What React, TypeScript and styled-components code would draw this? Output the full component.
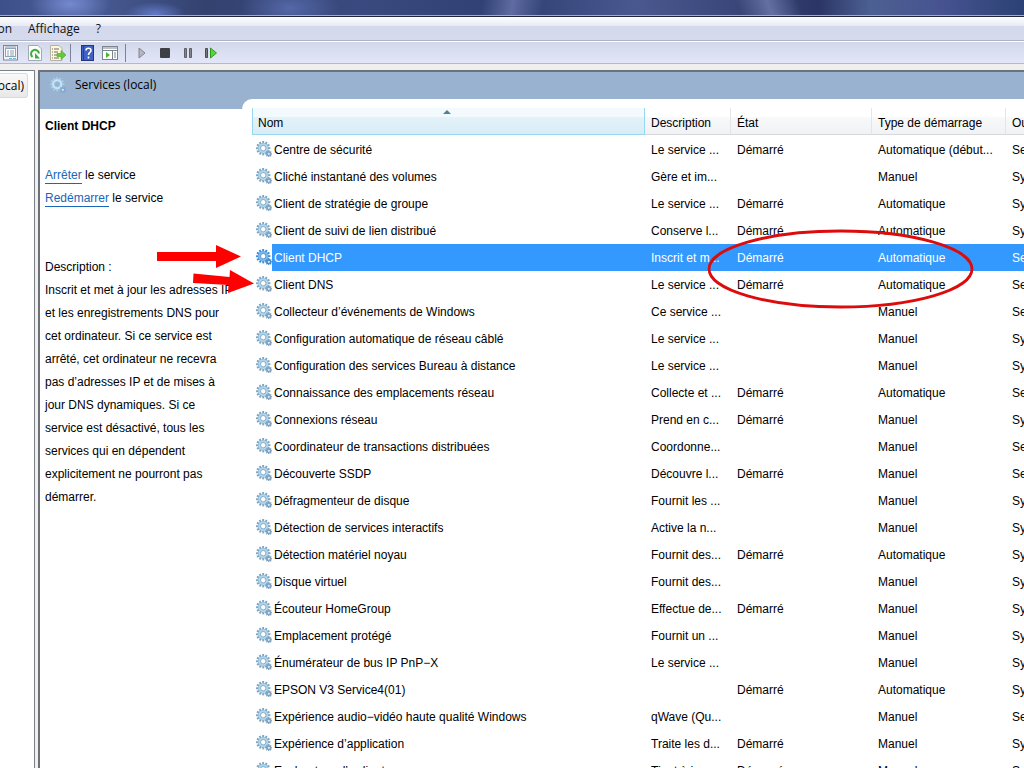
import React from "react";
import styled, { createGlobalStyle, css } from "styled-components";

const Global = createGlobalStyle`
  * { box-sizing: border-box; }
  html, body, #root { height: 100%; }
  body {
    margin: 0;
    overflow: hidden;
    background: #fff;
    color: #000;
    font-family: "Liberation Sans", Arial, sans-serif;
    font-size: 12px;
  }
`;

const uiFont = css`
  font-family: "Open Sans", "Noto Sans", sans-serif;
  font-size: 12px;
  line-height: 16px;
`;

const Window = styled.div`
  display: flex;
  flex-direction: column;
  height: 100%;
`;

const TitleBar = styled.div`
  flex: none;
  height: 17px;
  border-bottom: 1px solid #1e2440;
  box-shadow: inset 0 -1px 0 #a4abd0;
  background:
    radial-gradient(ellipse 40px 20px at 70px 4px, #7489cf, transparent),
    radial-gradient(ellipse 30px 12px at 155px 14px, #6179c6, transparent),
    radial-gradient(ellipse 50px 24px at 290px 8px, #5568a8, transparent),
    linear-gradient(100deg, transparent 47%, #5f6ba2 50%, transparent 53%),
    linear-gradient(70deg, transparent 72%, #6470a2 75%, transparent 78%),
    linear-gradient(90deg, #3d5089, #4b5d98 8%, #33426f 20%, #3a4a80 35%, #2f3f72 50%, #4a5890 62%, #3a4678 72%, #2b3666 80%, #4d6092 85%, #465390 92%, #2b4174);
`;

const MenuBar = styled.nav`
  flex: none;
  display: flex;
  align-items: center;
  gap: 16px;
  height: 25px;
  border-bottom: 1px solid #fff;
  box-shadow: inset 0 -1px 0 #aeb4c4;
  background: linear-gradient(#fff, #e6eaf5 9px, #d3d9eb 9px, #d5daee);
`;

const MenuItem = styled.button<{ $w?: number }>`
  ${uiFont}
  display: flex;
  justify-content: flex-end;
  width: ${(p) => (p.$w ? `${p.$w}px` : "auto")};
  border: 0;
  padding: 0;
  background: none;
  color: #111;
`;

const ToolBar = styled.div`
  flex: none;
  display: flex;
  align-items: center;
  height: 22px;
  padding: 1px 0 0 2px;
  border-bottom: 1px solid #b4b8cc;
  background: linear-gradient(#d2d8ea, #e2e6f8);
`;

const ToolButton = styled.button<{ $w?: number }>`
  flex: none;
  display: flex;
  align-items: center;
  justify-content: center;
  width: ${(p) => p.$w ?? 23}px;
  height: 20px;
  padding: 0;
  border: 0;
  background: none;
`;

const Separator = styled.span`
  width: 1px;
  height: 18px;
  margin: 0 4px;
  background: #7c8296;
`;

const Body = styled.div`
  flex: 1;
  min-height: 0;
  display: flex;
  padding-top: 6px;
  background: #eeefee;
`;

const Tree = styled.aside`
  flex: none;
  width: 35px;
  padding-top: 2px;
  border-top: 1px solid #7b7f86;
  border-right: 1px solid #7b7f86;
  background: #fff;
`;

const TreeItem = styled.button`
  ${uiFont}
  display: flex;
  align-items: center;
  justify-content: flex-end;
  width: 28px;
  height: 25px;
  padding: 0 3px 0 0;
  border: 1px solid #dadada;
  border-left: 0;
  border-radius: 0 3px 3px 0;
  background: linear-gradient(#f9f9f9, #e8e8e8);
`;

const Pane = styled.main`
  flex: 1;
  min-width: 0;
  display: flex;
  flex-direction: column;
  margin-left: 3px;
  border-top: 2px solid #6d7278;
  border-left: 2px solid #6d7278;
  background: #99b2d0;
`;

const PaneHeader = styled.header`
  ${uiFont}
  flex: none;
  display: flex;
  align-items: center;
  gap: 9px;
  height: 27px;
  padding: 0 0 2px 10px;
`;

const Split = styled.div`
  flex: 1;
  min-height: 0;
  display: flex;
`;

const Detail = styled.section`
  flex: none;
  width: 202px;
  margin-top: 10px;
  padding: 6px 0 0 5px;
  background: #fff;
  line-height: 23px;
`;

const ServiceTitle = styled.h1`
  margin: 0 0 26px;
  font-size: 12px;
  line-height: 23px;
`;

const Line = styled.p`
  margin: 0;
`;

const Action = styled.a`
  color: #1a66b8;
  text-decoration: none;
  border-bottom: 1px solid #1a66b8;
  padding-bottom: 1px;
`;

const Description = styled.div`
  width: 197px;
  margin-top: 46px;
`;

const ListPanel = styled.section`
  flex: 1;
  min-width: 0;
  overflow: hidden;
  padding: 9px 0 0 10px;
  border-top-left-radius: 10px;
  background: #fff;
`;

const Corner = styled.div`
  flex: 1;
  min-width: 0;
  display: flex;
  background: linear-gradient(#99b2d0 10px, #fff 10px);
`;

const Table = styled.table`
  width: 100%;
  table-layout: fixed;
  border-collapse: separate;
  border-spacing: 0;
`;

const Col = styled.col<{ $w?: number }>`
  width: ${(p) => (p.$w ? `${p.$w}px` : "auto")};
`;

const Th = styled.th<{ $sorted?: boolean }>`
  position: relative;
  height: 27px;
  padding: 3px 0 0 6px;
  border-right: 1px solid ${(p) => (p.$sorted ? "#96d9f0" : "#e2e6ea")};
  border-bottom: 1px solid ${(p) => (p.$sorted ? "#96d9f0" : "#d5d8dc")};
  background: ${(p) =>
    p.$sorted
      ? "linear-gradient(#f3fafd 9px, #e3f2f9 9px, #d8ecf6)"
      : "linear-gradient(#fff 9px, #f8f9fa 9px, #f1f2f4)"};
  box-shadow: ${(p) => (p.$sorted ? "inset 1px 0 0 #96d9f0" : "none")};
  font-weight: normal;
  text-align: left;
  white-space: nowrap;
  overflow: hidden;

  &:last-child {
    border-right: 0;
  }
`;

const SortMark = styled.svg`
  position: absolute;
  top: 2px;
  left: 50%;
  margin-left: -5px;
`;

const Row = styled.tr<{ $selected?: boolean }>`
  ${(p) =>
    p.$selected &&
    css`
      color: #fff;
      td {
        background: #3399ff;
      }
      td:first-child {
        background: linear-gradient(90deg, #fff 20px, #3399ff 20px);
      }
    `}
`;

const Td = styled.td`
  height: 27px;
  padding: 0 0 0 6px;
  overflow: hidden;
  white-space: nowrap;
`;

const NameCell = styled.div`
  display: flex;
  align-items: center;
  gap: 2px;
  margin-left: -2px;

  svg {
    margin-bottom: 2px;
  }
`;

const HeadRow = styled.tr`
  td {
    height: 1px;
    padding: 0;
  }
`;

const Annotations = styled.svg`
  position: absolute;
  top: 0;
  left: 0;
  pointer-events: none;
`;

const teeth = (n: number) =>
  Array.from({ length: n }, (_, i) => (i * 360) / n);

function Gears({ selected, pale }: { selected?: boolean; pale?: boolean }) {
  const rim = selected ? "#3f8fd8" : pale ? "#a9cbe6" : "#7fa6c2";
  const face = selected ? "#7dbbee" : pale ? "#c6e4f6" : "#b0d6ec";
  const line = selected ? "#3a7fc0" : pale ? "#9cc4e0" : "#6e9abf";
  const small = selected ? "#3f86c8" : pale ? "#7fa8cc" : "#7b9fbe";
  return (
    <svg width="16" height="16" viewBox="0 0 16 16" aria-hidden="true">
      {teeth(12).map((a) => (
        <rect key={a} x="6.2" y="0" width="1.900" height="3" fill={rim} transform={`rotate(${a} 7.200 7.200)`} />
      ))}
      <circle cx="7.200" cy="7.200" r="5.300" fill={rim} />
      <circle cx="7.200" cy="7.200" r="3.900" fill={pale ? "#99b2d0" : "#fff"} stroke={face} strokeWidth="2.200" />
      <circle cx="7.200" cy="7.200" r="2.700" fill="none" stroke={line} strokeWidth="0.800" />
      {teeth(8).map((a) => (
        <rect key={a} x="12.200" y="9.400" width="1.300" height="2" fill={small} transform={`rotate(${a} 12.800 12.800)`} />
      ))}
      <circle cx="12.800" cy="12.800" r="1.700" fill="#dbe9f3" stroke={small} strokeWidth="1.100" />
    </svg>
  );
}

const S = "Démarré";
const A = "Automatique";
const M = "Manuel";

const services: [string, string, string, string, string][] = [
  ["Centre de sécurité", "Le service ...", S, "Automatique (début...", "Se"],
  ["Cliché instantané des volumes", "Gère et im...", "", M, "Sy"],
  ["Client de stratégie de groupe", "Le service ...", S, A, "Sy"],
  ["Client de suivi de lien distribué", "Conserve l...", S, A, "Sy"],
  ["Client DHCP", "Inscrit et m...", S, A, "Se"],
  ["Client DNS", "Le service ...", S, A, "Se"],
  ["Collecteur d’événements de Windows", "Ce service ...", "", M, "Se"],
  ["Configuration automatique de réseau câblé", "Le service ...", "", M, "Sy"],
  ["Configuration des services Bureau à distance", "Le service ...", "", M, "Sy"],
  ["Connaissance des emplacements réseau", "Collecte et ...", S, A, "Se"],
  ["Connexions réseau", "Prend en c...", S, M, "Sy"],
  ["Coordinateur de transactions distribuées", "Coordonne...", "", M, "Se"],
  ["Découverte SSDP", "Découvre l...", S, M, "Se"],
  ["Défragmenteur de disque", "Fournit les ...", "", M, "Sy"],
  ["Détection de services interactifs", "Active la n...", "", M, "Sy"],
  ["Détection matériel noyau", "Fournit des...", S, A, "Sy"],
  ["Disque virtuel", "Fournit des...", "", M, "Sy"],
  ["Écouteur HomeGroup", "Effectue de...", S, M, "Sy"],
  ["Emplacement protégé", "Fournit un ...", "", M, "Sy"],
  ["Énumérateur de bus IP PnP−X", "Le service ...", "", M, "Sy"],
  ["EPSON V3 Service4(01)", "", S, A, "Sy"],
  ["Expérience audio−vidéo haute qualité Windows", "qWave (Qu...", "", M, "Se"],
  ["Expérience d’application", "Traite les d...", S, M, "Sy"],
  ["Explorateur d’ordinateurs", "Tient à jo...", S, M, "Sy"],
];

export default function App() {
  return (
    <Window>
      <Global />
      <TitleBar />
      <MenuBar>
        <MenuItem $w={12}>on</MenuItem>
        <MenuItem>Affichage</MenuItem>
        <MenuItem>?</MenuItem>
      </MenuBar>
      <ToolBar>
        <ToolButton $w={17} aria-label="Propriétés">
          <svg width="16" height="16" viewBox="0 0 16 16">
            <rect x=".5" y=".5" width="14" height="14.500" fill="#f1f3f6" stroke="#7c8894" />
            <rect x="2.500" y="3.500" width="10" height="8" fill="#fff" stroke="#93a2b4" />
            <path d="M4 6h2M7 6h4M4 8h2M7 8h4M4 10h2M7 10h4M2 2h11" stroke="#8a9cb2" />
            <path d="M6 13.500h3M10 13.500h3" stroke="#5cc4d8" />
          </svg>
        </ToolButton>
        <ToolButton $w={31} aria-label="Actualiser">
          <svg width="14" height="16" viewBox="0 0 14 16">
            <path d="M.5.5h9.500l3.500 3.500v11.500H.5z" fill="#fbfcfb" stroke="#a3aab4" />
            <path d="M4.500 12A4 4 0 1 1 11 8.500" fill="none" stroke="#3cae3c" strokeWidth="2" />
            <path d="M7 8v5.500h5z" fill="#3cae3c" />
          </svg>
        </ToolButton>
        <ToolButton $w={16} aria-label="Exporter la liste">
          <svg width="16" height="16" viewBox="0 0 16 16">
            <path d="M.5.5h8.500l3 3v12H.5z" fill="#fdf8dc" stroke="#b5b29f" />
            <path d="M2 4h1M4 4h5M2 7h1M4 7h4M2 10h1M4 10h4M2 13h1M4 13h5" stroke="#6c6a60" />
            <path d="M7 8.500h4V5.500l5 4.500-5 4.500v-3H7z" fill="#63cb38" stroke="#46a526" strokeWidth=".6" />
          </svg>
        </ToolButton>
        <Separator />
        <ToolButton $w={24} aria-label="Aide">
          <svg width="13" height="16" viewBox="0 0 13 16">
            <rect x=".5" y=".5" width="12" height="15" fill="#3f62c4" stroke="#24377e" />
            <path d="M2.500 1v14" stroke="#243f94" />
            <path d="M5 5.500c0-3 5-3 5 0 0 2-2.500 2-2.500 4.500M7.500 11.500v2" fill="none" stroke="#fff" strokeWidth="1.600" />
          </svg>
        </ToolButton>
        <ToolButton $w={22} aria-label="Volet Actions">
          <svg width="16" height="14" viewBox="0 0 16 14">
            <rect x=".5" y=".5" width="15" height="13" fill="#fff" stroke="#7b8590" />
            <path d="M1 2h14M1 4.500h14M10.500 5v8" stroke="#7b8590" />
            <path d="M12 7h2M12 9h2M12 11h2" stroke="#7b8590" />
            <path d="M4 6l4 3-4 3z" fill="#49b42e" />
          </svg>
        </ToolButton>
        <Separator />
        <ToolButton aria-label="Démarrer le service">
          <svg width="8" height="12" viewBox="0 0 8 12">
            <path d="M1 1l6 5-6 5z" fill="#b5b7c0" stroke="#82858f" />
          </svg>
        </ToolButton>
        <ToolButton aria-label="Arrêter le service">
          <svg width="10" height="10" viewBox="0 0 10 10">
            <rect width="10" height="10" rx="1" fill="#3d3f44" />
          </svg>
        </ToolButton>
        <ToolButton aria-label="Suspendre le service">
          <svg width="8" height="10" viewBox="0 0 8 10">
            <path d="M.5.500h2v9h-2zM5.500.500h2v9h-2z" fill="#83868e" stroke="#5c5f66" />
          </svg>
        </ToolButton>
        <ToolButton aria-label="Redémarrer le service">
          <svg width="12" height="12" viewBox="0 0 12 12">
            <path d="M.5 1.500h2v9h-2z" fill="#777" stroke="#4a4d52" />
            <path d="M5.500 1l6 5-6 5z" fill="#5ad23c" stroke="#2e9a22" />
          </svg>
        </ToolButton>
      </ToolBar>
      <Body>
        <Tree>
          <TreeItem>ocal)</TreeItem>
        </Tree>
        <Pane>
          <PaneHeader>
            <Gears pale />
            <span>Services (local)</span>
          </PaneHeader>
          <Split>
            <Detail>
              <ServiceTitle>Client DHCP</ServiceTitle>
              <Line>
                <Action href="#arreter">Arrêter</Action> le service
              </Line>
              <Line>
                <Action href="#redemarrer">Redémarrer</Action> le service
              </Line>
              <Description>
                <Line>Description :</Line>
                <Line>
                  Inscrit et met à jour les adresses IP
                  <br />
                  et les enregistrements DNS pour
                  <br />
                  cet ordinateur. Si ce service est
                  <br />
                  arrêté, cet ordinateur ne recevra
                  <br />
                  pas d’adresses IP et de mises à
                  <br />
                  jour DNS dynamiques. Si ce
                  <br />
                  service est désactivé, tous les
                  <br />
                  services qui en dépendent
                  <br />
                  explicitement ne pourront pas
                  <br />
                  démarrer.
                </Line>
              </Description>
            </Detail>
            <Corner>
              <ListPanel>
                <Table>
                  <colgroup>
                    <Col $w={393} />
                    <Col $w={86} />
                    <Col $w={141} />
                    <Col $w={134} />
                    <Col />
                  </colgroup>
                  <thead>
                    <tr>
                      <Th $sorted>
                        Nom
                        <SortMark width="8" height="5" viewBox="0 0 8 5">
                          <path d="M4 0l4 4H0z" fill="#4f8295" />
                        </SortMark>
                      </Th>
                      <Th>Description</Th>
                      <Th>État</Th>
                      <Th>Type de démarrage</Th>
                      <Th>Ou</Th>
                    </tr>
                  </thead>
                  <tbody>
                    <HeadRow>
                      <td colSpan={5} />
                    </HeadRow>
                    {services.map(([name, desc, state, type, logon]) => {
                      const selected = name === "Client DHCP";
                      return (
                        <Row key={name} $selected={selected}>
                          <Td>
                            <NameCell>
                              <Gears selected={selected} />
                              {name}
                            </NameCell>
                          </Td>
                          <Td>{desc}</Td>
                          <Td>{state}</Td>
                          <Td>{type}</Td>
                          <Td>{logon}</Td>
                        </Row>
                      );
                    })}
                  </tbody>
                </Table>
              </ListPanel>
            </Corner>
          </Split>
        </Pane>
      </Body>
      <Annotations width="1024" height="768" viewBox="0 0 1024 768" aria-hidden="true">
        <path d="M157 252h59v-7l25 11.500-25 11.500v-7h-59z" fill="#f00" />
        <path d="M193.500 273.500l36 3.500.500-7 24 13.500-26 9.500.500-8-35.500-2z" fill="#f00" />
        <ellipse cx="840.500" cy="269" rx="131.500" ry="38" fill="none" stroke="#dd0c0c" strokeWidth="2.800" />
      </Annotations>
    </Window>
  );
}
